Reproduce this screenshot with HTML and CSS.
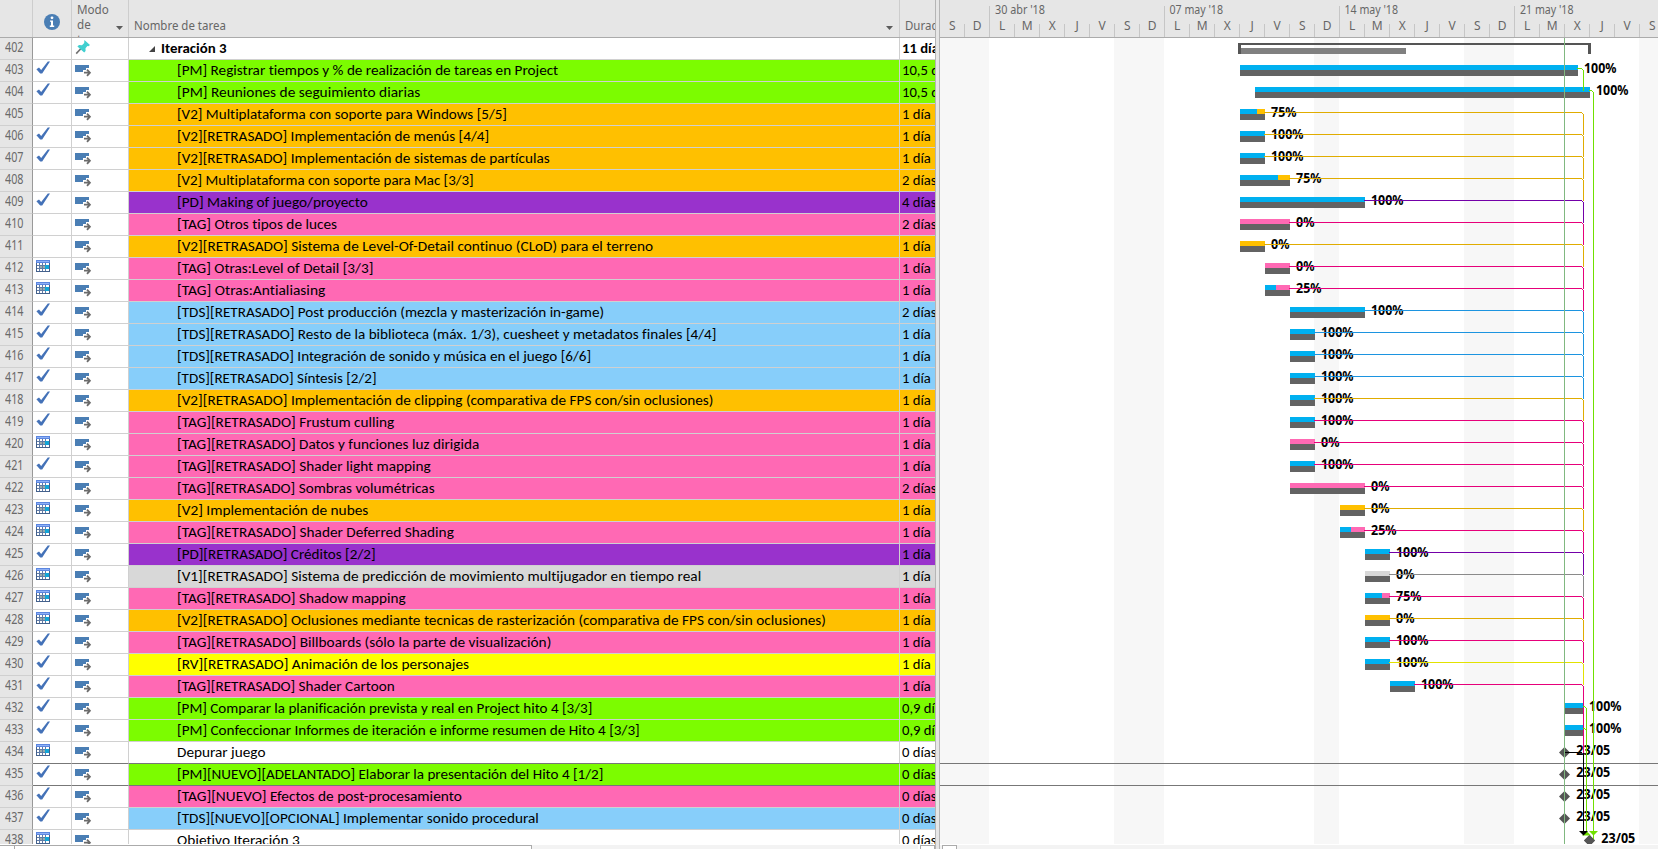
FILE: index.html
```html
<!DOCTYPE html>
<html lang="es">
<head>
<meta charset="utf-8">
<title>Iteración 3</title>
<link rel="stylesheet" href="styles.css">
</head>
<body>
<svg class="defs" width="0" height="0">
  <symbol id="check" viewBox="0 0 16 16"><path d="M0.4 9.2 L3 7.4 L5.2 10 L11.8 1.6 L14 1.6 L6.2 13.6 L4.2 13.6 Z" fill="#4472b8"/></symbol>
  <symbol id="cal" viewBox="0 0 16 16">
    <rect x="0" y="2" width="14" height="12" fill="#44618c"/>
    <rect x="0" y="2" width="14" height="3" fill="#5b86e0"/><rect x="1" y="3" width="12" height="1" fill="#8fb0f5"/>
    <rect x="1" y="5" width="12" height="8" fill="#fff"/>
    <path d="M3.500 5v8M6.500 5v8M9.500 5v8M1 7.500h12M1 10.500h12" stroke="#5f7ba6" fill="none"/>
    <rect x="4" y="8" width="2" height="2" fill="#9aa"/><rect x="7" y="8" width="2" height="2" fill="#9aa"/>
    <rect x="9" y="7" width="4" height="4" fill="#12a5d6"/>
  </symbol>
  <symbol id="mode" viewBox="0 0 18 18">
    <rect x="1" y="5" width="14" height="7" fill="#4a7eb4"/>
    <path d="M9 10h3V8h3v3h2v6h-5v-2H9z" fill="#fff"/>
    <path d="M10 12.700h5.500M13 9.600l2.900 3.100-2.900 3.100" stroke="#6b6b6b" stroke-width="1.800" fill="none"/>
  </symbol>
  <symbol id="pin" viewBox="0 0 18 18">
    <path d="M2.200 15.600L7 10.500" stroke="#707070" stroke-width="1.600"/>
    <path d="M10.400 2l5.600 5-1.600 1.200-1-.2-1.900 2.200.1 2.900-1.400 1.400L3.400 8.500 5 7l3 .3 2.200-2.200z" fill="#40cfd0"/>
  </symbol>
</svg>
<main class="project">
  <section class="sheet">
    <header class="sheet-head">
      <div class="h num"></div>
      <div class="h info"><svg width="16" height="16" viewBox="0 0 16 16"><circle cx="8" cy="8" r="8" fill="#4a7eb4"/><path d="M6 6.4h3v5.2h1.2V13H5.8v-1.4H7V7.8H6z" fill="#fff"/><circle cx="8" cy="3.8" r="1.4" fill="#fff"/></svg></div>
      <div class="h mode"><div class="wrap">Modo<br>de<br>tarea</div><i class="drop"></i></div>
      <div class="h name"><span>Nombre de tarea</span><i class="drop"></i></div>
      <div class="h dur"><span>Duración</span></div>
    </header>
    <div class="rows" id="rows"></div>
    <footer class="sbar"><div class="thumb"></div><div class="track"></div><div class="btn"></div></footer>
  </section>
  <div class="splitter"></div>
  <section class="chart">
    <svg id="gantt" width="718" height="844" viewBox="940 0 718 844"></svg>
    <footer class="sbar right"><div class="btn"></div></footer>
  </section>
</main>
<script src="app.js"></script>
</body>
</html>
```

FILE: styles.css
```css
* { box-sizing: border-box; }
body { margin: 0; background: #fff; overflow: hidden; }
.defs { position: absolute; }
.project { display: flex; width: 1658px; height: 849px; overflow: hidden; }
.sheet { display: flex; flex-direction: column; width: 935px; height: 849px; overflow: hidden; }
.sheet-head { display: flex; flex: none; height: 38px; background: #e6e6e6; border-bottom: 1px solid #ababab; color: #666; font: 12px/15px "Noto Sans", sans-serif; }
.h { display: flex; overflow: hidden; border-right: 1px solid #cdcdcd; white-space: nowrap; }
.num { flex: none; width: 33px; }
.info { flex: none; width: 39px; }
.mode { flex: none; width: 57px; }
.name { flex: none; width: 771px; }
.dur { flex: none; width: 35px; }
.h.dur, .row .dur { border-right: 0; }
.h.info { justify-content: center; padding-top: 14px; }
.h.mode { padding: 2px 5px 0 5px; justify-content: space-between; }
.wrap { height: 48px; transform: scaleX(.97); transform-origin: left; }
.drop { width: 7px; height: 4px; background: #5c5c5c; clip-path: polygon(0 0, 100% 0, 50% 100%); align-self: flex-end; margin-bottom: 7px; }
.h.name { padding: 18px 6px 0 5px; justify-content: space-between; }
.h.name span, .h.dur span { transform: scaleX(.955); transform-origin: left; }
.h.dur { padding: 18px 0 0 5px; }
.rows { flex: none; height: 806px; overflow: hidden; }
.row { display: flex; height: 22px; }
.cell { height: 22px; border-right: 1px solid #d0d0d0; border-bottom: 1px solid #d0d0d0; overflow: hidden; white-space: nowrap; }
.row .num { background: #e6e6e6; border-right-color: #999; color: #6a6a6a; font: 13.5px/18px "Noto Sans", sans-serif; padding: 0 0 0 5px; }
.row .num span { display: inline-block; transform: scaleX(.8); transform-origin: left; }
.row .info { padding: 0 0 0 3px; }
.row .mode { padding: 0 0 0 2px; }
.cell svg { display: block; }
.row .name { padding-left: 48px; }
.row .name, .row .dur { color: #000; font: 14.67px/20px Carlito, Lato, sans-serif; font-variant-ligatures: none; }
.row .dur { padding-left: 2px; }
.fit { display: inline-block; transform-origin: left; }
.row.summary .name { padding-left: 20px; }
.row.summary .name, .row.summary .dur { font-weight: bold; }
.tri { display: inline-block; width: 6px; height: 6px; margin-right: 6px; background: #444; clip-path: polygon(100% 0, 100% 100%, 0 100%); vertical-align: 1px; }
.sel .cell:not(.num) { border-bottom-color: #777; }
.lime { background: #7cfc00; }
.orange { background: #ffc000; }
.purple { background: #9932cc; }
.pink { background: #ff69b4; }
.blue { background: #87cefa; }
.gray { background: #d8d8d8; }
.yellow { background: #ff0; }
.splitter { flex: none; width: 5px; background: #e6e6e6; border: solid #b5b5b5; border-width: 0 1px; }
.chart { width: 718px; display: flex; flex-direction: column; }
.chart > svg { display: block; flex: none; }
.sbar { flex: none; display: flex; height: 5px; margin-top: 1px; background: #fff; }
.sheet .sbar { height: 4px; }
.thumb { width: 532px; border: 1px solid #ababab; border-width: 1px 1px 0 0; }
.thumb::before { content: ""; display: block; width: 14px; height: 4px; border-right: 1px solid #ababab; }
.track { flex: 1; background: #f3f3f3; margin-right: 2px; }
.btn { width: 15px; border: 1px solid #ababab; border-bottom: 0; background: #fff; }
.sbar.right { background: #f3f3f3; padding-left: 2px; }
.date { font: 12px "Noto Sans", sans-serif; fill: #666; }
.pct { font: bold 14px "Noto Sans", sans-serif; fill: #000; }
```

FILE: app.js
```js
// id, icon, color, name, text right edge, duration, bar start, bar end, progress end, label
const T = [
 [402,'','','Iteración 3',0,'11 días'],
 [403,'k','lime','[PM] Registrar tiempos y % de realización de tareas en Project',558,'10,5 días',1240,1578,1578,'100%'],
 [404,'k','lime','[PM] Reuniones de seguimiento diarias',419.5,'10,5 días',1255,1590,1590,'100%'],
 [405,'','orange','[V2] Multiplataforma con soporte para Windows [5/5]',506.5,'1 día',1240,1265,1257,'75%'],
 [406,'k','orange','[V2][RETRASADO] Implementación de menús [4/4]',488.5,'1 día',1240,1265,1265,'100%'],
 [407,'k','orange','[V2][RETRASADO] Implementación de sistemas de partículas',549,'1 día',1240,1265,1265,'100%'],
 [408,'','orange','[V2] Multiplataforma con soporte para Mac [3/3]',473,'2 días',1240,1290,1278,'75%'],
 [409,'k','purple','[PD] Making of juego/proyecto',367,'4 días',1240,1365,1365,'100%'],
 [410,'','pink','[TAG] Otros tipos de luces',337,'2 días',1240,1290,1240,'0%'],
 [411,'','orange','[V2][RETRASADO] Sistema de Level-Of-Detail continuo (CLoD) para el terreno',653,'1 día',1240,1265,1240,'0%'],
 [412,'c','pink','[TAG] Otras:Level of Detail [3/3]',373,'1 día',1265,1290,1265,'0%'],
 [413,'c','pink','[TAG] Otras:Antialiasing',325,'1 día',1265,1290,1276,'25%'],
 [414,'k','blue','[TDS][RETRASADO] Post producción (mezcla y masterización in-game)',604,'2 días',1290,1365,1365,'100%'],
 [415,'k','blue','[TDS][RETRASADO] Resto de la biblioteca (máx. 1/3), cuesheet y metadatos finales [4/4]',716,'1 día',1290,1315,1315,'100%'],
 [416,'k','blue','[TDS][RETRASADO] Integración de sonido y música en el juego [6/6]',591,'1 día',1290,1315,1315,'100%'],
 [417,'k','blue','[TDS][RETRASADO] Síntesis [2/2]',376,'1 día',1290,1315,1315,'100%'],
 [418,'k','orange','[V2][RETRASADO] Implementación de clipping (comparativa de FPS con/sin oclusiones)',713,'1 día',1290,1315,1315,'100%'],
 [419,'k','pink','[TAG][RETRASADO] Frustum culling',394,'1 día',1290,1315,1315,'100%'],
 [420,'c','pink','[TAG][RETRASADO] Datos y funciones luz dirigida',479,'1 día',1290,1315,1290,'0%'],
 [421,'k','pink','[TAG][RETRASADO] Shader light mapping',430.5,'1 día',1290,1315,1315,'100%'],
 [422,'c','pink','[TAG][RETRASADO] Sombras volumétricas',434.5,'2 días',1290,1365,1290,'0%'],
 [423,'c','orange','[V2] Implementación de nubes',368,'1 día',1340,1365,1340,'0%'],
 [424,'c','pink','[TAG][RETRASADO] Shader Deferred Shading',453,'1 día',1340,1365,1351,'25%'],
 [425,'k','purple','[PD][RETRASADO] Créditos [2/2]',375.5,'1 día',1365,1390,1390,'100%'],
 [426,'c','gray','[V1][RETRASADO] Sistema de predicción de movimiento multijugador en tiempo real',700.5,'1 día',1365,1390,1365,'0%'],
 [427,'c','pink','[TAG][RETRASADO] Shadow mapping',405,'1 día',1365,1390,1382,'75%'],
 [428,'c','orange','[V2][RETRASADO] Oclusiones mediante tecnicas de rasterización (comparativa de FPS con/sin oclusiones)',825.5,'1 día',1365,1390,1365,'0%'],
 [429,'k','pink','[TAG][RETRASADO] Billboards (sólo la parte de visualización)',550.5,'1 día',1365,1390,1390,'100%'],
 [430,'k','yellow','[RV][RETRASADO] Animación de los personajes',468,'1 día',1365,1390,1390,'100%'],
 [431,'k','pink','[TAG][RETRASADO] Shader Cartoon',394,'1 día',1390,1415,1415,'100%'],
 [432,'k','lime','[PM] Comparar la planificación prevista y real en Project hito 4 [3/3]',592,'0,9 días',1565,1583.5,1583.5,'100%'],
 [433,'k','lime','[PM] Confeccionar Informes de iteración e informe resumen de Hito 4 [3/3]',639,'0,9 días',1565,1583.5,1583.5,'100%'],
 [434,'c','','Depurar juego',265,'0 días'],
 [435,'k','lime','[PM][NUEVO][ADELANTADO] Elaborar la presentación del Hito 4 [1/2]',603,'0 días'],
 [436,'k','pink','[TAG][NUEVO] Efectos de post-procesamiento',461.5,'0 días'],
 [437,'k','blue','[TDS][NUEVO][OPCIONAL] Implementar sonido procedural',538.5,'0 días'],
 [438,'c','','Objetivo Iteración 3',299,'0 días']
];
const FILL = {lime:'#7cfc00',orange:'#ffc000',purple:'#9932cc',pink:'#ff69b4',blue:'#87cefa',gray:'#d8d8d8',yellow:'#ff0'};
const LINK = {lime:'#70e000',orange:'#e0ac00',purple:'#7300a8',pink:'#e6007a',blue:'#1c94e0',gray:'#8a8a8a',yellow:'#e2e200'};

const icon = (id, w, h) => `<svg width="${w}" height="${h}"><use href="#${id}"/></svg>`;
document.getElementById('rows').innerHTML = T.map(t => {
  const [id, ic, color, name, right, dur] = t;
  const cls = (id === 402 ? ' summary' : '') + (id === 434 || id === 435 ? ' sel' : '');
  const w = id === 402 ? 66 : right - 176.5;
  return `<div class="row${cls}"><div class="cell num"><span>${id}</span></div>` +
    `<div class="cell info">${ic ? icon(ic === 'k' ? 'check' : 'cal', 16, 16) : ''}</div>` +
    `<div class="cell mode">${icon(id === 402 ? 'pin' : 'mode', 18, 18)}</div>` +
    `<div class="cell name ${color}">${id === 402 ? '<i class="tri"></i>' : ''}<span class="fit" data-w="${w}">${name}</span></div>` +
    `<div class="cell dur ${color}"><span class="fit">${dur}</span></div></div>`;
}).join('');
document.querySelectorAll('.fit[data-w]').forEach(e => {
  e.style.transform = `scaleX(${e.dataset.w / e.offsetWidth})`;
});

const rect = (x, y, w, h, f) => `<rect x="${x}" y="${y}" width="${w}" height="${h}" fill="${f}" shape-rendering="crispEdges"/>`;
const text = (x, y, w, s, c) => `<text x="${x}" y="${y}" class="${c}" textLength="${w}" lengthAdjust="spacingAndGlyphs">${s}</text>`;
let g = rect(940, 0, 718, 38, '#e6e6e6');
[[940,49],[1114,50],[1314,25],[1464,50],[1639,19]].forEach(b => g += rect(b[0], 38, b[1], 806, '#f7f7f7'));
const days = 'SDLMXJV';
for (let i = 0; i < 29; i++) {
  const x = 939 + 25 * i;
  if (i) g += rect(x, i % 7 === 2 ? 6 : 24, 1, i % 7 === 2 ? 31 : 13, '#c6c6c6');
  g += `<text x="${x + 13.2}" y="30" text-anchor="middle" class="date">${days[i % 7]}</text>`;
}
[["30 abr '18",995,50],["07 may '18",1169.5,53.5],["14 may '18",1344.5,53.5],["21 may '18",1520,53.5]].forEach(d => g += text(d[1], 14, d[2], d[0], 'date'));
g += rect(940, 37, 718, 1, '#ababab');
g += rect(940, 763, 718, 1, '#777') + rect(940, 785, 718, 1, '#777');
g += rect(1238, 43, 353, 2, '#555') + rect(1238, 43, 3, 11, '#555') + rect(1588, 43, 3, 11, '#555') + rect(1241, 48, 165, 6, '#808080');

const W = {'100%':32.5, '75%':25.5, '25%':25.5, '0%':18.5};
let links = '';
T.forEach((t, i) => {
  const top = 38 + 22 * i, [id, , color, , , , s, e, p, label] = t;
  if (s) {
    g += rect(s, top + 5, e - s, 5, FILL[color]) + rect(s, top + 5, p - s, 5, '#00b0f0') + rect(s, top + 10, e - s, 6, '#636363');
    g += text(Math.floor(e) + 6, top + 13.4, W[label], label, 'pct');
    const c = LINK[color];
    if (id === 404) links += rect(1589, top + 8, 3, 1, c) + rect(1592, top + 9, 1, 1, c) + rect(1593, top + 10, 1, 749, c);
    else if (id > 431) links += rect(1583, top + 8, 2, 1, c) + rect(1585, top + 9, 1, 1, c) + rect(1586, top + 10, 1, 821 - top, c);
    else {
      const end = id === 431 ? 753 : top + 31;
      links += rect(e - 1, top + 8, 1582 - e + 1, 1, c) + rect(1582, top + 9, 1, 1, c) + rect(1583, top + 10, 1, end - top - 10, c);
    }
  } else if (i) {
    const x = id === 438 ? 1589.5 : 1564.5, y = top + 10.5;
    g += `<path d="M${x} ${y-5.5}l5.5 5.5-5.5 5.5-5.5-5.5z" fill="#555"/>`;
    g += text(x + 11.8, top + 13.4, 34, '23/05', 'pct');
  }
});
links += rect(1565, 752, 17, 1, '#000') + rect(1583, 753, 1, 79, '#000');
links += '<path d="M1586.500 831l4.500 4.500h-9zM1589 831h9l-4.500 4.500z" fill="#70e000"/>';
links += '<path d="M1579 831h9l-4.500 4.500z" fill="#000"/>';
links += `<path d="M1589.500 835l5.500 5.500-5.500 5.500-5.500-5.500z" fill="#555"/>`;
links += rect(1564, 38, 1, 806, '#80b880');
document.getElementById('gantt').innerHTML = g + links;
```
